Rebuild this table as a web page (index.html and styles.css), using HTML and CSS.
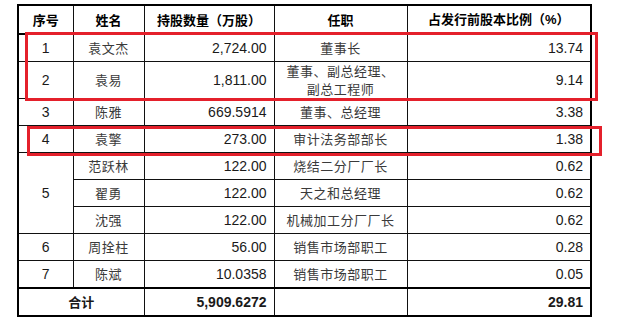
FILE: index.html
```html
<!DOCTYPE html>
<html lang="zh-CN">
<head>
    <meta charset="UTF-8">
    <title>发行前股东持股情况</title>
    <link rel="stylesheet" href="styles.css">
</head>
<body>
    <div class="sheet">
        <table class="holders">
            <colgroup>
                <col class="c-no">
                <col class="c-name">
                <col class="c-shares">
                <col class="c-post">
                <col class="c-ratio">
            </colgroup>
            <thead>
                <tr>
                    <th>序号</th>
                    <th>姓名</th>
                    <th>持股数量（万股）</th>
                    <th>任职</th>
                    <th>占发行前股本比例（<span class="pct">%</span>）</th>
                </tr>
            </thead>
            <tbody>
                <tr>
                    <td class="no">1</td>
                    <td class="cn">袁文杰</td>
                    <td class="num">2,724.00</td>
                    <td class="cn">董事长</td>
                    <td class="num">13.74</td>
                </tr>
                <tr class="tall">
                    <td class="no">2</td>
                    <td class="cn">袁易</td>
                    <td class="num">1,811.00</td>
                    <td class="cn two-line">董事、副总经理、<br>副总工程师</td>
                    <td class="num">9.14</td>
                </tr>
                <tr>
                    <td class="no">3</td>
                    <td class="cn">陈雅</td>
                    <td class="num">669.5914</td>
                    <td class="cn">董事、总经理</td>
                    <td class="num">3.38</td>
                </tr>
                <tr>
                    <td class="no">4</td>
                    <td class="cn">袁擎</td>
                    <td class="num">273.00</td>
                    <td class="cn">审计法务部部长</td>
                    <td class="num">1.38</td>
                </tr>
                <tr>
                    <td class="no" rowspan="3">5</td>
                    <td class="cn">范跃林</td>
                    <td class="num">122.00</td>
                    <td class="cn">烧结二分厂厂长</td>
                    <td class="num">0.62</td>
                </tr>
                <tr>
                    <td class="cn">翟勇</td>
                    <td class="num">122.00</td>
                    <td class="cn">天之和总经理</td>
                    <td class="num">0.62</td>
                </tr>
                <tr>
                    <td class="cn">沈强</td>
                    <td class="num">122.00</td>
                    <td class="cn">机械加工分厂厂长</td>
                    <td class="num">0.62</td>
                </tr>
                <tr>
                    <td class="no">6</td>
                    <td class="cn">周拴柱</td>
                    <td class="num">56.00</td>
                    <td class="cn">销售市场部职工</td>
                    <td class="num">0.28</td>
                </tr>
                <tr>
                    <td class="no">7</td>
                    <td class="cn">陈斌</td>
                    <td class="num">10.0358</td>
                    <td class="cn">销售市场部职工</td>
                    <td class="num">0.05</td>
                </tr>
            </tbody>
            <tfoot>
                <tr>
                    <td class="total-label" colspan="2">合计</td>
                    <td class="num strong">5,909.6272</td>
                    <td></td>
                    <td class="num strong">29.81</td>
                </tr>
            </tfoot>
        </table>

        <!-- red markers drawn over the table -->
        <div class="mark mark-top"></div>
        <div class="mark mark-mid"></div>
    </div>
</body>
</html>
```

FILE: styles.css
```css
/* General */
body {
    margin: 0;
    background-color: #ffffff;
    font-family: "Liberation Sans", "Noto Sans CJK SC", sans-serif;
    color: #1a1a1a;
}

.sheet {
    position: relative;
    width: 623px;
    height: 329px;
    padding: 4px 0 0 17px;
    box-sizing: border-box;
}

/* Table */
.holders {
    border-collapse: collapse;
    table-layout: fixed;
    width: 573px;
    border: 2px solid #000;
}

.c-no { width: 55px; }
.c-name { width: 71px; }
.c-shares { width: 130px; }
.c-post { width: 133px; }
.c-ratio { width: 184px; }

.holders th,
.holders td {
    border: 1px solid #111;
    height: 26px;
    padding: 0 7px;
    font-size: 14px;
    line-height: 16px;
    white-space: nowrap;
}

.holders th {
    height: 27px;
    font-family: "Noto Sans CJK SC", sans-serif;
    font-size: 13px;
    font-weight: bold;
    color: #000;
    text-align: center;
}

.holders th .pct {
    font-family: "Liberation Sans", sans-serif;
}

.holders thead th {
    border-bottom: 2px solid #000;
}

.holders tr.tall td {
    height: 36px;
}

.no {
    text-align: center;
}

.cn {
    font-family: "Noto Sans CJK SC", sans-serif;
    font-size: 13px !important;
    color: #3a3a3a;
    text-align: center;
    letter-spacing: 0.5px;
}

.two-line {
    line-height: 18px !important;
}

.num {
    text-align: right;
}

.strong {
    font-weight: bold;
}

.total-label {
    font-family: "Noto Sans CJK SC", sans-serif;
    font-size: 13px !important;
    font-weight: bold;
    text-align: center;
}

.holders tfoot td {
    border-top: 2px solid #000;
}

/* Red highlight boxes */
.mark {
    position: absolute;
    border: 3px solid #e4202b;
    box-sizing: border-box;
}

.mark-top {
    left: 25px;
    top: 32px;
    width: 573px;
    height: 69px;
}

.mark-mid {
    left: 27px;
    top: 126px;
    width: 575px;
    height: 30px;
}
```
